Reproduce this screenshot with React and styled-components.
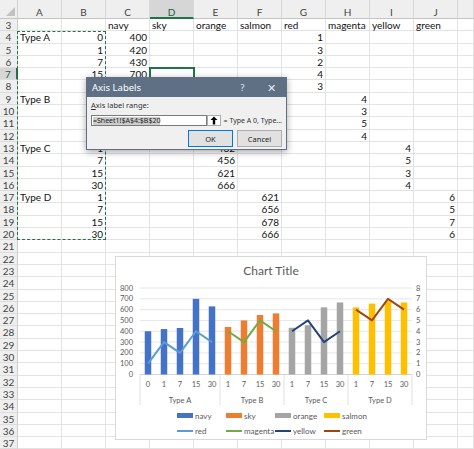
import React from "react";
import styled, { createGlobalStyle } from "styled-components";

const GREEN = "#217346";

const GlobalStyle = createGlobalStyle`
  html, body { margin: 0; padding: 0; background: #fff; overflow: hidden; }
  body { font-family: Lato, "Liberation Sans", sans-serif; }
`;

const COLS = ["A", "B", "C", "D", "E", "F", "G", "H", "I", "J", "K"];

const cells = {
	3: { C: "navy", D: "sky", E: "orange", F: "salmon", G: "red", H: "magenta", I: "yellow", J: "green" },
	4: { A: "Type A", B: 0, C: 400, G: 1 },
	5: { B: 1, C: 420, G: 3 },
	6: { B: 7, C: 430, G: 2 },
	7: { B: 15, C: 700, G: 4 },
	8: { B: 30, C: 630, G: 3 },
	9: { A: "Type B", B: 1, D: 440, H: 4 },
	10: { B: 7, D: 500, H: 3 },
	11: { B: 15, D: 550, H: 5 },
	12: { B: 30, D: 565, H: 4 },
	13: { A: "Type C", B: 1, E: 432, I: 4 },
	14: { B: 7, E: 456, I: 5 },
	15: { B: 15, E: 621, I: 3 },
	16: { B: 30, E: 666, I: 4 },
	17: { A: "Type D", B: 1, F: 621, J: 6 },
	18: { B: 7, F: 656, J: 5 },
	19: { B: 15, F: 678, J: 7 },
	20: { B: 30, F: 666, J: 6 },
};

const groups = [
	{ name: "Type A", start: 0, bar: "#4472c4", line: "#5b9bd5", cats: [0, 1, 7, 15, 30], bars: [400, 420, 430, 700, 630], pts: [1, 3, 2, 4, 3] },
	{ name: "Type B", start: 5, bar: "#ed7d31", line: "#70ad47", cats: [1, 7, 15, 30], bars: [440, 500, 550, 565], pts: [4, 3, 5, 4] },
	{ name: "Type C", start: 9, bar: "#a5a5a5", line: "#264478", cats: [1, 7, 15, 30], bars: [432, 456, 621, 666], pts: [4, 5, 3, 4] },
	{ name: "Type D", start: 13, bar: "#ffc000", line: "#9e480e", cats: [1, 7, 15, 30], bars: [621, 656, 678, 666], pts: [6, 5, 7, 6] },
];

const legend = [
	{ name: "navy", color: "#4472c4", kind: "bar" },
	{ name: "sky", color: "#ed7d31", kind: "bar" },
	{ name: "orange", color: "#a5a5a5", kind: "bar" },
	{ name: "salmon", color: "#ffc000", kind: "bar" },
	{ name: "red", color: "#5b9bd5", kind: "line" },
	{ name: "magenta", color: "#70ad47", kind: "line" },
	{ name: "yellow", color: "#264478", kind: "line" },
	{ name: "green", color: "#9e480e", kind: "line" },
];

// plot geometry (svg coords)
const X0 = 24;
const STEP = 16;
const Y0 = 90.5;
const H = 86.5;
const yBar = v => Y0 - (v / 800) * H;
const yLine = v => Y0 - (v / 8) * H;
const cx = i => X0 + STEP / 2 + i * STEP;

const Workbook = styled.div`
  position: relative;
  width: 474px;
  height: 449px;
  overflow: hidden;
`;

const Sheet = styled.div`
  display: grid;
  grid-template-columns: 18px repeat(10, 44px) 1fr;
  grid-template-rows: 19px;
  grid-auto-rows: 12.3px;
  font-size: 10px;
  color: #111;
`;

const Corner = styled.div`
  position: relative;
  background: #efefef;
  border-right: 1px solid #cfcfcf;
  border-bottom: 1px solid #c4c4c4;
  &::after {
    content: "";
    position: absolute;
    right: 2px;
    bottom: 2px;
    width: 9px;
    height: 9px;
    background: #c2c2c2;
    clip-path: polygon(100% 0, 100% 100%, 0 100%);
  }
`;

const ColHead = styled.div`
  box-sizing: border-box;
  padding-top: 6px;
  text-align: center;
  line-height: 12px;
  color: ${p => (p.$active ? "#1d5e38" : "#444")};
  background: ${p => (p.$active ? "#d6d6d6" : "#efefef")};
  border-right: 1px solid #d8d8d8;
  border-bottom: ${p => (p.$active ? `2px solid ${GREEN}` : "1px solid #c4c4c4")};
`;

const RowHead = styled.div`
  box-sizing: border-box;
  text-align: center;
  line-height: 12px;
  color: ${p => (p.$active ? "#1d5e38" : "#444")};
  background: ${p => (p.$active ? "#d6d6d6" : "#efefef")};
  border-bottom: 1px solid #dcdcdc;
  border-right: ${p => (p.$active ? `2px solid ${GREEN}` : "1px solid #cfcfcf")};
`;

const Cell = styled.div`
  box-sizing: border-box;
  padding: 0 2px;
  line-height: 12px;
  white-space: nowrap;
  text-align: ${p => (p.$num ? "right" : "left")};
  border-right: 1px solid #e3e3e3;
  border-bottom: 1px solid #e3e3e3;
`;

const CopyMarquee = styled.div`
  position: absolute;
  left: 17px;
  top: 31px;
  width: 89px;
  height: 209px;
  box-sizing: border-box;
  border: 1px dashed ${GREEN};
`;

const ActiveCell = styled.div`
  position: absolute;
  left: 149px;
  top: 67px;
  width: 46px;
  height: 15px;
  box-sizing: border-box;
  border: 2px solid ${GREEN};
`;

/* dialog */
const Dialog = styled.div`
  position: absolute;
  left: 86px;
  top: 77px;
  width: 201px;
  height: 73px;
  box-sizing: border-box;
  background: #f0f0f0;
  border: 1px solid #5f6f84;
  box-shadow: 0 2px 7px rgba(0, 0, 0, 0.35);
  font-family: "Noto Sans", "Open Sans", sans-serif;
  display: flex;
  flex-direction: column;
`;

const TitleBar = styled.div`
  height: 19px;
  background: #5f6f84;
  color: #fff;
  display: flex;
  align-items: center;
  padding-left: 5px;
  font-size: 9.5px;
`;

const TitleText = styled.span`
  flex: 1;
`;

const TitleBtn = styled.span`
  width: 29px;
  text-align: center;
  font-size: ${p => p.$size || 9}px;
  color: #e8ecf2;
`;

const Body = styled.div`
  padding: 3px 4px 0 4px;
  display: flex;
  flex-direction: column;
  font-size: 7.5px;
  color: #222;
`;

const Label = styled.div`
  line-height: 10px;
  margin-bottom: 5px;
  color: #333;
`;

const InputRow = styled.div`
  display: flex;
  align-items: center;
  gap: 3px;
`;

const RangeBox = styled.div`
  width: 117px;
  height: 11px;
  box-sizing: border-box;
  background: #fff;
  border: 1px solid #7a7a7a;
  display: flex;
  align-items: center;
  padding-left: 1px;
`;

const Selected = styled.span`
  background: #cdcdcd;
  line-height: 8px;
  font-size: 7px;
  color: #222;
`;

const PickBtn = styled.div`
  width: 14px;
  height: 11px;
  margin-left: -3px;
  box-sizing: border-box;
  background: #fff;
  border: 1px solid #adadad;
  display: flex;
  align-items: center;
  justify-content: center;
`;

const Preview = styled.span`
  font-size: 7px;
  color: #333;
  white-space: nowrap;
`;

const ButtonRow = styled.div`
  display: flex;
  justify-content: flex-end;
  gap: 4px;
  margin-top: 4px;
  padding-right: 0;
`;

const DlgButton = styled.div`
  width: 45px;
  height: 17px;
  box-sizing: border-box;
  background: #e1e1e1;
  border: 1px solid ${p => (p.$default ? "#0078d7" : "#adadad")};
  display: flex;
  align-items: center;
  justify-content: center;
  font-size: 7.5px;
  color: #222;
`;

/* chart */
const ChartBox = styled.div`
  position: absolute;
  left: 115px;
  top: 256px;
  width: 312px;
  height: 184px;
  box-sizing: border-box;
  background: #fff;
  border: 1px solid #d9d9d9;
  display: flex;
  flex-direction: column;
  color: #595959;
  font-family: Lato, "Liberation Sans", sans-serif;
`;

const ChartTitle = styled.div`
  height: 27px;
  line-height: 27px;
  text-align: center;
  font-size: 12px;
`;

const Legend = styled.div`
  display: grid;
  grid-template-columns: repeat(4, 49px);
  grid-auto-rows: 15px;
  padding-left: 61px;
  font-size: 8px;
`;

const LegendItem = styled.div`
  display: flex;
  align-items: center;
  gap: 2px;
`;

const Swatch = styled.span`
  width: 16px;
  height: ${p => (p.$kind === "bar" ? 5 : 2)}px;
  background: ${p => p.$color};
`;

function Plot() {
	const grid = [0, 100, 200, 300, 400, 500, 600, 700, 800];
	const seps = [0, 5, 9, 13, 17].map(i => X0 + i * STEP);
	return (
		<svg width="310" height="124" style={{ display: "block" }} fontFamily="Lato, 'Liberation Sans', sans-serif" fontSize="7.5" fill="#595959">
			{grid.map(v => (
				<g key={v}>
					<line x1={X0} x2={X0 + 17 * STEP} y1={yBar(v)} y2={yBar(v)} stroke={v === 0 ? "#c8c8c8" : "#e0e0e0"} strokeWidth="0.8" />
					<text x="17" y={yBar(v) + 2.6} textAnchor="end">{v}</text>
					<text x="300" y={yBar(v) + 2.6}>{v / 100}</text>
				</g>
			))}
			{seps.map(x => (
				<line key={x} x1={x} x2={x} y1={Y0} y2={121} stroke="#d9d9d9" strokeWidth="0.8" />
			))}
			{groups.map(g => (
				<g key={g.name}>
					{g.bars.map((v, i) => (
						<rect key={i} x={cx(g.start + i) - 3.25} y={yBar(v)} width="6.5" height={Y0 - yBar(v)} fill={g.bar} />
					))}
					<polyline
						points={g.pts.map((v, i) => `${cx(g.start + i)},${yLine(v)}`).join(" ")}
						fill="none"
						stroke={g.line}
						strokeWidth="2"
						strokeLinejoin="round"
					/>
					{g.cats.map((c, i) => (
						<text key={i} x={cx(g.start + i)} y="103" textAnchor="middle">{c}</text>
					))}
					<text x={X0 + (g.start + g.cats.length / 2) * STEP} y="119" textAnchor="middle">{g.name}</text>
				</g>
			))}
		</svg>
	);
}

export default function App() {
	const rows = [];
	for (let r = 3; r <= 37; r++) rows.push(r);

	return (
		<Workbook>
			<GlobalStyle />
			<Sheet>
				<Corner />
				{COLS.map(c => (
					<ColHead key={c} $active={c === "D"}>{c === "K" ? "" : c}</ColHead>
				))}
				{rows.map(r => (
					<React.Fragment key={r}>
						<RowHead $active={r === 7}>{r}</RowHead>
						{COLS.map(c => {
							const v = cells[r] && cells[r][c];
							return (
								<Cell key={c} $num={typeof v === "number"}>{v !== undefined ? v : ""}</Cell>
							);
						})}
					</React.Fragment>
				))}
			</Sheet>

			<CopyMarquee />
			<ActiveCell />

			<ChartBox>
				<ChartTitle>Chart Title</ChartTitle>
				<Plot />
				<Legend>
					{legend.map(l => (
						<LegendItem key={l.name}>
							<Swatch $kind={l.kind} $color={l.color} />
							{l.name}
						</LegendItem>
					))}
				</Legend>
			</ChartBox>

			<Dialog>
				<TitleBar>
					<TitleText>Axis Labels</TitleText>
					<TitleBtn>?</TitleBtn>
					<TitleBtn $size={11}>✕</TitleBtn>
				</TitleBar>
				<Body>
					<Label><u>A</u>xis label range:</Label>
					<InputRow>
						<RangeBox>
							<Selected>=Sheet1!$A$4:$B$20</Selected>
						</RangeBox>
						<PickBtn>
							<svg width="8" height="9" viewBox="0 0 8 9">
								<path d="M4 0.5 L7.5 4 L5.2 4 L5.2 8.5 L2.8 8.5 L2.8 4 L0.5 4 Z" fill="#000" />
							</svg>
						</PickBtn>
						<Preview>= Type A 0, Type...</Preview>
					</InputRow>
					<ButtonRow>
						<DlgButton $default>OK</DlgButton>
						<DlgButton>Cancel</DlgButton>
					</ButtonRow>
				</Body>
			</Dialog>
		</Workbook>
	);
}
